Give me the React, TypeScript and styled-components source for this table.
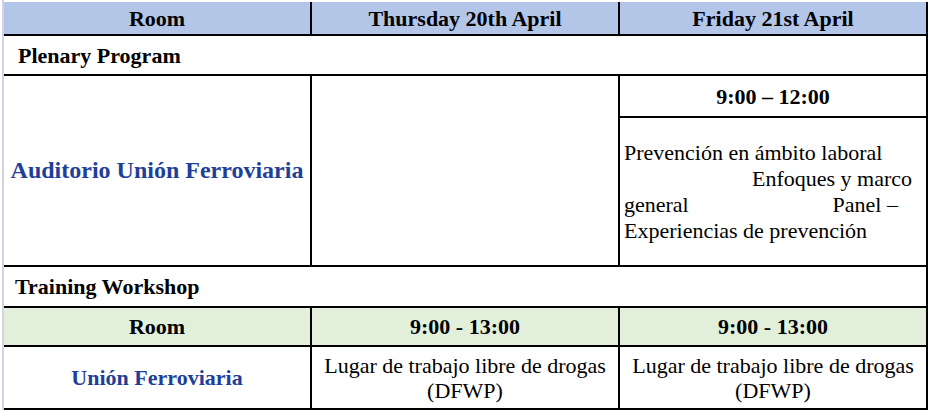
import React from "react";
import styled, { createGlobalStyle } from "styled-components";

const serifStack = `"Liberation Serif", "Noto Serif", "DejaVu Serif", FreeSerif, Tinos, "Nimbus Roman", "Nimbus Roman No9 L", Georgia, "Times New Roman", Times, serif`;

const GlobalStyle = createGlobalStyle`
  html, body {
    margin: 0;
    padding: 0;
    background: #ffffff;
  }
  body {
    font-family: ${serifStack};
    color: #000;
  }
`;

const App = () => {
  return (
    <>
      <GlobalStyle />
      <Page>
        <Schedule>
          <HeadCell $tone="blue">Room</HeadCell>
          <HeadCell $tone="blue">Thursday 20th April</HeadCell>
          <HeadCell $tone="blue">Friday 21st April</HeadCell>

          <SectionCell $indent={14}>Plenary Program</SectionCell>

          <RoomCell $size={24} $rows={2}>Auditorio Unión Ferroviaria</RoomCell>
          <EmptyCell $rows={2} />
          <TimeCell>9:00 – 12:00</TimeCell>
          <TextCell>
            <Line>Prevención en ámbito laboral</Line>
            <Line $align="flex-end">Enfoques y marco</Line>
            <Line $align="space-between" $inset={14}>
              <span>general</span>
              <span>Panel –</span>
            </Line>
            <Line>Experiencias de prevención</Line>
          </TextCell>

          <SectionCell $indent={11}>Training Workshop</SectionCell>

          <HeadCell $tone="green">Room</HeadCell>
          <HeadCell $tone="green">9:00 - 13:00</HeadCell>
          <HeadCell $tone="green">9:00 - 13:00</HeadCell>

          <RoomCell $size={22}>Unión Ferroviaria</RoomCell>
          <SessionCell>
            Lugar de trabajo libre de drogas
            <br />
            (DFWP)
          </SessionCell>
          <SessionCell>
            Lugar de trabajo libre de drogas
            <br />
            (DFWP)
          </SessionCell>
        </Schedule>
      </Page>
    </>
  );
};

export default App;

const Page = styled.div`
  margin-left: 2px;
  padding-top: 2px;
  border-left: 2px solid #d3d3e4;
  height: 410px;
  box-sizing: border-box;
`;

const Schedule = styled.div`
  display: grid;
  grid-template-columns: 306px 306px 306px;
  grid-template-rows: 32px 38px 40px 147px 39px 37px 61px;
  gap: 2px;
  width: max-content;
  padding: 0 2px 2px 0;
  background: #000;
`;

const Cell = styled.div`
  background: #fff;
  display: flex;
  align-items: center;
  font-family: ${serifStack};
  font-size: 22px;
  line-height: 25px;
`;

const HeadCell = styled(Cell)<{ $tone: "blue" | "green" }>`
  justify-content: center;
  font-weight: bold;
  background: ${(p) => (p.$tone === "blue" ? "#b4c6e7" : "#e2efda")};
`;

const SectionCell = styled(Cell)<{ $indent: number }>`
  grid-column: 1 / -1;
  font-weight: bold;
  padding-left: ${(p) => p.$indent}px;
`;

const RoomCell = styled(Cell)<{ $size: number; $rows?: number }>`
  grid-row: span ${(p) => p.$rows || 1};
  justify-content: center;
  font-weight: bold;
  font-size: ${(p) => p.$size}px;
  color: #1f3f99;
  white-space: nowrap;
`;

const EmptyCell = styled(Cell)<{ $rows: number }>`
  grid-row: span ${(p) => p.$rows};
`;

const TimeCell = styled(Cell)`
  justify-content: center;
  font-weight: bold;
`;

const TextCell = styled(Cell)`
  flex-direction: column;
  align-items: stretch;
  justify-content: center;
  padding: 0 14px 0 4px;
  line-height: 26px;
`;

const Line = styled.div<{ $align?: string; $inset?: number }>`
  display: flex;
  justify-content: ${(p) => p.$align || "flex-start"};
  padding-right: ${(p) => p.$inset || 0}px;
  white-space: nowrap;
`;

const SessionCell = styled(Cell)`
  justify-content: center;
  text-align: center;
`;
